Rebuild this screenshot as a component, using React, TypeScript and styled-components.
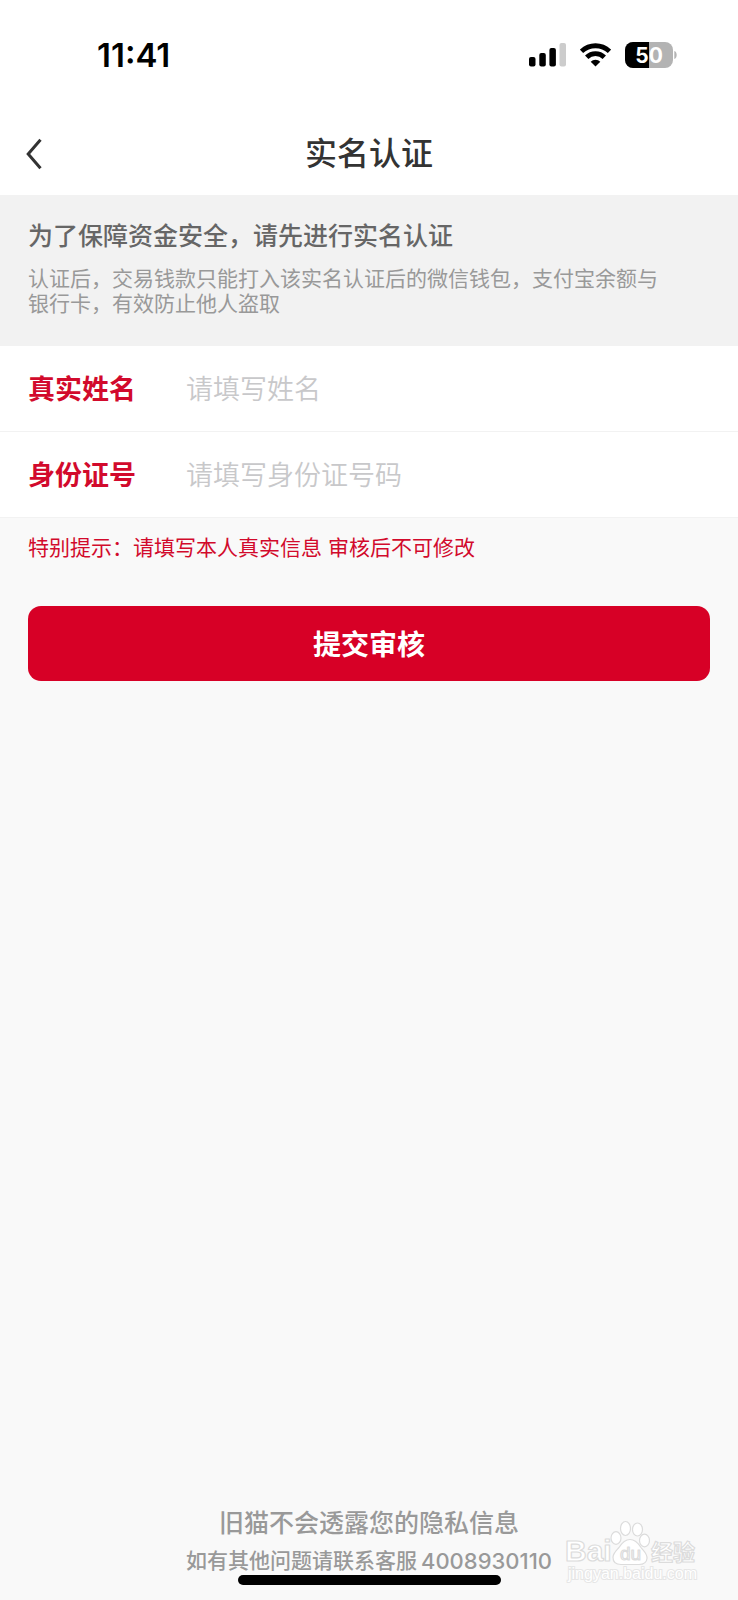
import React from "react";
import styled, { createGlobalStyle } from "styled-components";

const GlobalStyle = createGlobalStyle`
  *, *::before, *::after { box-sizing: border-box; }
  body {
    margin: 0;
    background: #f9f9f9;
    font-family: Inter, "Noto Sans CJK SC", sans-serif;
  }
  h1, h2, p { margin: 0; }
`;

const Page = styled.div`
  position: relative;
  display: flex;
  flex-direction: column;
  min-height: 100vh;
  background: #f9f9f9;
`;

const StatusBar = styled.div`
  display: flex;
  align-items: center;
  justify-content: space-between;
  height: 110px;
  padding: 0 61px 0 97px;
  background: #fff;
`;

const Clock = styled.time`
  font-size: 33px;
  line-height: 36px;
  font-weight: 600;
  color: #000;
`;

const StatusIcons = styled.div`
  display: flex;
  align-items: center;
  gap: 14px;

  svg { display: block; }
`;

const NavBar = styled.header`
  display: grid;
  grid-template-columns: 60px 1fr 60px;
  align-items: center;
  height: 85px;
  padding: 2px 12px 0;
  background: #fff;
`;

const BackButton = styled.button`
  display: flex;
  align-items: center;
  height: 60px;
  padding: 0 14px;
  border: 0;
  background: none;
  cursor: pointer;
`;

const Title = styled.h1`
  font-size: 32px;
  line-height: 48px;
  font-weight: 500;
  text-align: center;
  color: #333;
`;

const Notice = styled.section`
  display: flex;
  flex-direction: column;
  gap: 12px;
  padding: 23px 60px 30px 28px;
  background: #f2f2f2;
`;

const NoticeTitle = styled.h2`
  font-size: 25px;
  line-height: 36px;
  font-weight: 500;
  color: #666;
`;

const NoticeText = styled.p`
  font-size: 21px;
  line-height: 25px;
  color: #999;
`;

const Form = styled.form`
  display: flex;
  flex-direction: column;
`;

const Field = styled.div`
  display: flex;
  align-items: center;
  height: 86px;
  padding: 2px 28px 0;
  background: #fff;
  border-bottom: 1px solid #f2f2f2;
`;

const FieldLabel = styled.label`
  flex: 0 0 158px;
  font-size: 27px;
  line-height: 40px;
  font-weight: 600;
  color: #d20a2c;
`;

const FieldInput = styled.input`
  flex: 1;
  min-width: 0;
  height: 60px;
  padding: 0;
  border: 0;
  outline: 0;
  background: none;
  font-family: inherit;
  font-size: 27px;
  color: #333;

  &::placeholder {
    color: #c8c8ca;
    font-weight: 350;
    opacity: 1;
  }
`;

const Hint = styled.p`
  padding: 15px 28px 0;
  font-size: 21px;
  line-height: 30px;
  color: #d20a2c;
`;

const SubmitButton = styled.button`
  height: 75px;
  margin: 43px 28px 0;
  padding: 0 0 2px;
  border: 0;
  border-radius: 13px;
  background: #d70026;
  font-family: inherit;
  font-size: 28px;
  font-weight: 600;
  color: #fff;
  cursor: pointer;
`;

const Footer = styled.footer`
  display: flex;
  flex-direction: column;
  align-items: center;
  margin-top: auto;
  padding-bottom: 15px;
  font-weight: 500;
  color: #999;
`;

const Privacy = styled.p`
  font-size: 25px;
  line-height: 36px;
`;

const Contact = styled.p`
  display: flex;
  gap: 4px;
  margin-top: 6px;
  font-size: 21px;
  line-height: 28px;
`;

const Phone = styled.a`
  font-size: 22px;
  color: inherit;
  text-decoration: none;
`;

const HomeIndicator = styled.div`
  width: 263px;
  height: 10px;
  border-radius: 5px;
  background: #000;
`;

const Watermark = styled.svg`
  position: absolute;
  right: 38px;
  bottom: 12px;
  pointer-events: none;
`;

const SignalIcon = () => (
  <svg width="37" height="26" viewBox="0 0 37 26" aria-hidden="true">
    <rect x="0" y="15" width="6.5" height="9.5" rx="2" />
    <rect x="10.3" y="11" width="6.5" height="13.5" rx="2" />
    <rect x="20.4" y="6" width="6.5" height="18.5" rx="2" />
    <rect x="30.5" y="1" width="6.5" height="23.5" rx="2" fill="#ccc" />
  </svg>
);

const WifiIcon = () => (
  <svg width="31" height="26" viewBox="0 0 31 26" aria-hidden="true">
    <g fill="none" stroke="#000" strokeWidth="4.8">
      <path d="M1.5 9.3a20.4 20.4 0 0 1 28 0" />
      <path d="M6.7 15.3a12.6 12.6 0 0 1 17.6 0" />
    </g>
    <path d="M15.5 24.5l-4.800-4.700a6.800 6.800 0 0 1 9.600 0z" />
  </svg>
);

const BatteryIcon = () => (
  <svg width="52" height="26" viewBox="0 0 52 26" role="img" aria-label="50">
    <path d="M8 0h32a8 8 0 0 1 8 8v10a8 8 0 0 1-8 8H8a8 8 0 0 1-8-8V8a8 8 0 0 1 8-8z" fill="#b3b3b3" />
    <path d="M8 0h16v26H8a8 8 0 0 1-8-8V8a8 8 0 0 1 8-8z" />
    <path d="M49.3 9c3.2 1 3.2 7 0 8z" fill="#b3b3b3" />
    <text x="24" y="21" textAnchor="middle" fontFamily="Inter, sans-serif" fontSize="21" fontWeight="700" fill="#fff">
      50
    </text>
  </svg>
);

const WatermarkLogo = () => (
  <Watermark width="136" height="70" viewBox="0 0 136 70" aria-hidden="true">
    <g fill="#fff" stroke="#dcdcdc" strokeWidth="1.2" strokeLinejoin="round">
      <text x="1" y="43" fontSize="30" fontWeight="700" fontFamily="Liberation Sans, sans-serif">Bai</text>
      <ellipse cx="52" cy="20" rx="5" ry="6.3" />
      <ellipse cx="61.5" cy="10.5" rx="5" ry="7" />
      <ellipse cx="73.5" cy="11.5" rx="5" ry="6.5" />
      <ellipse cx="80.5" cy="22.5" rx="5" ry="6.3" />
      <path d="M66 21.5c5.500 0 8.500 4 11 8c2.500 3.500 6.500 6 6 11c-.5 5-4 6-8 6h-18c-5 0-8-2-8-7c0-4.500 3.500-7 6-10c2.500-4 5.500-8 11-8z" />
      <text x="56" y="42" fontSize="19" fontFamily="Liberation Sans, sans-serif">du</text>
      <text x="87" y="42" fontSize="22" fontWeight="700" fontFamily="Noto Sans CJK SC, sans-serif">经验</text>
    </g>
    <text
      x="4"
      y="61"
      fontSize="16"
      fontFamily="Liberation Sans, sans-serif"
      fill="#fff"
      stroke="#e6e6e6"
      strokeWidth="2"
      paintOrder="stroke"
    >
      jingyan.baidu.com
    </text>
  </Watermark>
);

export default function App() {
  return (
    <Page>
      <GlobalStyle />
      <StatusBar>
        <Clock>11:41</Clock>
        <StatusIcons>
          <SignalIcon />
          <WifiIcon />
          <BatteryIcon />
        </StatusIcons>
      </StatusBar>
      <NavBar>
        <BackButton type="button" aria-label="返回">
          <svg width="17" height="32" viewBox="0 0 17 32" fill="none" stroke="#333" strokeWidth="3" aria-hidden="true">
            <path d="M14.500 1.800L2.200 16L14.500 30.200" />
          </svg>
        </BackButton>
        <Title>实名认证</Title>
      </NavBar>
      <Notice>
        <NoticeTitle>为了保障资金安全，请先进行实名认证</NoticeTitle>
        <NoticeText>认证后，交易钱款只能打入该实名认证后的微信钱包，支付宝余额与银行卡，有效防止他人盗取</NoticeText>
      </Notice>
      <Form onSubmit={(event) => event.preventDefault()}>
        <Field>
          <FieldLabel htmlFor="real-name">真实姓名</FieldLabel>
          <FieldInput id="real-name" type="text" placeholder="请填写姓名" />
        </Field>
        <Field>
          <FieldLabel htmlFor="id-number">身份证号</FieldLabel>
          <FieldInput id="id-number" type="text" placeholder="请填写身份证号码" />
        </Field>
        <Hint>特别提示：请填写本人真实信息 审核后不可修改</Hint>
        <SubmitButton type="submit">提交审核</SubmitButton>
      </Form>
      <Footer>
        <Privacy>旧猫不会透露您的隐私信息</Privacy>
        <Contact>
          如有其他问题请联系客服
          <Phone href="tel:4008930110">4008930110</Phone>
        </Contact>
        <HomeIndicator />
      </Footer>
      <WatermarkLogo />
    </Page>
  );
}
